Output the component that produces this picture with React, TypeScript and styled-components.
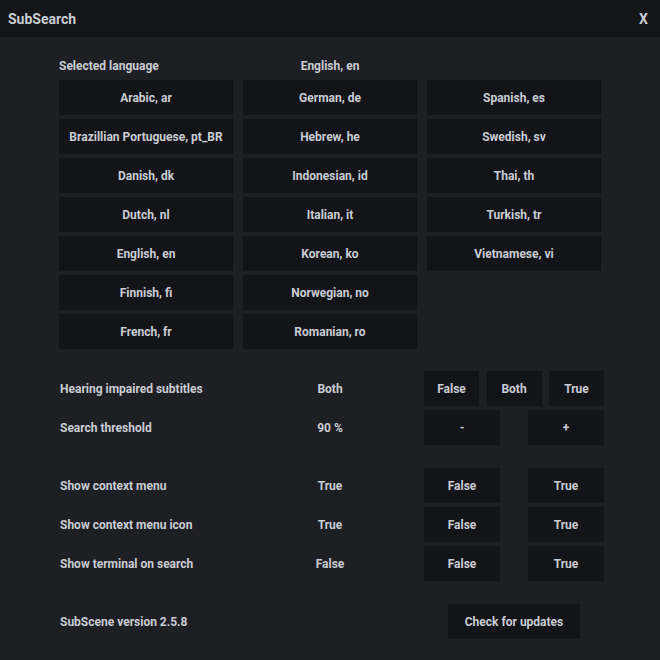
import React from 'react'
import styled, { createGlobalStyle } from 'styled-components'

const GlobalStyle = createGlobalStyle`
    html, body {
        margin: 0;
        padding: 0;
        background: #1e1f24;
    }
    body {
        font-family: Roboto, "Liberation Sans", sans-serif;
        color: #c9cdd3;
    }
`

const Window = styled.div`
    width: 660px;
    height: 660px;
    background: #1e1f24;
    display: flex;
    flex-direction: column;
`

const TitleBar = styled.div`
    height: 37px;
    background: #141519;
    display: flex;
    align-items: center;
    justify-content: space-between;
    padding: 0 12px 0 8px;
    font-size: 14px;
    font-weight: 700;
`

const Body = styled.div`
    padding: 19px 0 0 59px;
    display: flex;
    flex-direction: column;
`

const Header = styled.div`
    display: grid;
    grid-template-columns: 174px 174px;
    column-gap: 10px;
    height: 20px;
    align-items: center;
    margin-bottom: 4px;
    font-size: 12px;
    font-weight: 700;
`

const HeaderValue = styled.span`
    text-align: center;
`

const LangGrid = styled.div`
    display: grid;
    grid-template-columns: repeat(3, 174px);
    grid-auto-flow: column;
    grid-template-rows: repeat(7, 35px);
    gap: 4px 10px;
`

const Button = styled.button<{ $width?: number }>`
    width: ${(p) => (p.$width ? `${p.$width}px` : '100%')};
    height: 35px;
    border: none;
    margin: 0;
    padding: 0;
    background: #131418;
    color: #c9cdd3;
    font-family: inherit;
    font-size: 12px;
    font-weight: 700;
    cursor: pointer;
`

const Section = styled.div<{ $gap?: number }>`
    margin-top: ${(p) => p.$gap ?? 23}px;
    display: flex;
    flex-direction: column;
    gap: 4px;
`

const Row = styled.div`
    display: flex;
    align-items: center;
    height: 35px;
    font-size: 12px;
    font-weight: 700;
`

const Label = styled.div`
    width: 183px;
    padding-left: 1px;
`

const Value = styled.div`
    width: 174px;
    text-align: center;
`

const Controls = styled.div<{ $align?: string }>`
    margin-left: 7px;
    width: 180px;
    display: flex;
    justify-content: ${(p) => p.$align || 'space-between'};
`

const languages = [
    'Arabic, ar',
    'Brazillian Portuguese, pt_BR',
    'Danish, dk',
    'Dutch, nl',
    'English, en',
    'Finnish, fi',
    'French, fr',
    'German, de',
    'Hebrew, he',
    'Indonesian, id',
    'Italian, it',
    'Korean, ko',
    'Norwegian, no',
    'Romanian, ro',
    'Spanish, es',
    'Swedish, sv',
    'Thai, th',
    'Turkish, tr',
    'Vietnamese, vi',
]

const toggles = [
    { label: 'Show context menu', value: 'True' },
    { label: 'Show context menu icon', value: 'True' },
    { label: 'Show terminal on search', value: 'False' },
]

const App = () => {
    return (
        <Window>
            <GlobalStyle />
            <TitleBar>
                <span>SubSearch</span>
                <span>X</span>
            </TitleBar>
            <Body>
                <Header>
                    <span>Selected language</span>
                    <HeaderValue>English, en</HeaderValue>
                </Header>
                <LangGrid>
                    {languages.map((lang) => (
                        <Button key={lang}>{lang}</Button>
                    ))}
                </LangGrid>

                <Section $gap={22}>
                    <Row>
                        <Label>Hearing impaired subtitles</Label>
                        <Value>Both</Value>
                        <Controls>
                            <Button $width={55}>False</Button>
                            <Button $width={55}>Both</Button>
                            <Button $width={55}>True</Button>
                        </Controls>
                    </Row>
                    <Row>
                        <Label>Search threshold</Label>
                        <Value>90 %</Value>
                        <Controls>
                            <Button $width={76}>-</Button>
                            <Button $width={76}>+</Button>
                        </Controls>
                    </Row>
                </Section>

                <Section>
                    {toggles.map((t) => (
                        <Row key={t.label}>
                            <Label>{t.label}</Label>
                            <Value>{t.value}</Value>
                            <Controls>
                                <Button $width={76}>False</Button>
                                <Button $width={76}>True</Button>
                            </Controls>
                        </Row>
                    ))}
                </Section>

                <Section>
                    <Row>
                        <Label>SubScene version 2.5.8</Label>
                        <Value />
                        <Controls $align="center">
                            <Button $width={132}>Check for updates</Button>
                        </Controls>
                    </Row>
                </Section>
            </Body>
        </Window>
    )
}

export default App
